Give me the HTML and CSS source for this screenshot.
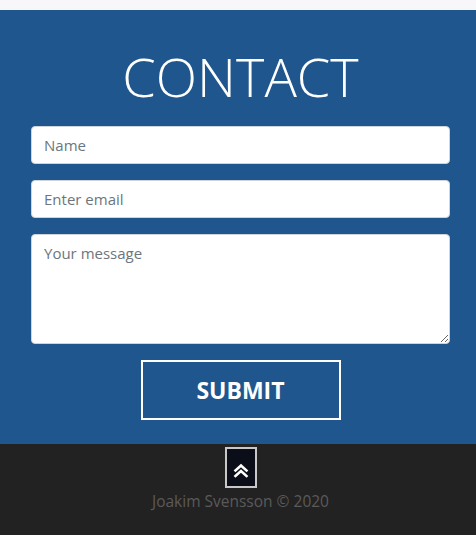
FILE: index.html
```html
<!DOCTYPE html>
<html lang="en">
<head>
<meta charset="utf-8">
<title>Contact</title>
<link rel="stylesheet" href="styles.css">
</head>
<body>
<div class="topbar"></div>
<section class="contact">
  <h1 class="title">CONTACT</h1>
  <form class="form">
    <input class="field" type="text" placeholder="Name">
    <input class="field" type="email" placeholder="Enter email">
    <textarea class="field area" placeholder="Your message"></textarea>
    <button class="submit" type="button">SUBMIT</button>
  </form>
</section>
<footer class="footer">
  <a class="up" href="#">
    <svg width="16" height="15" viewBox="0 0 16 15" fill="none" stroke="#fff" stroke-width="2.6" stroke-linecap="square" stroke-linejoin="miter">
      <polyline points="2.5,7.5 8,2.5 13.5,7.5"/>
      <polyline points="2.5,13 8,8 13.5,13"/>
    </svg>
  </a>
  <p class="copy">Joakim Svensson © 2020</p>
</footer>
</body>
</html>
```
FILE: styles.css
```css
* { box-sizing: border-box; }
html, body { margin: 0; padding: 0; }
body {
  font-family: "Open Sans", "Noto Sans", sans-serif;
  background: #222222;
}
.topbar {
  height: 10px;
  background: #f7f7f9;
}
.contact {
  background: #20568e;
  padding: 32px 26px 24px 31px;
  display: flex;
  flex-direction: column;
  align-items: center;
}
.title {
  margin: 0 0 16px;
  font-weight: 300;
  font-size: 54px;
  line-height: 68px;
  color: #fff;
  letter-spacing: 0;
}
.form {
  width: 100%;
  display: flex;
  flex-direction: column;
  align-items: center;
}
.field {
  width: 100%;
  height: 38px;
  margin: 0 0 16px;
  padding: 6px 12px;
  border: 1px solid #ced4da;
  border-radius: 4px;
  background: #fff;
  font-family: inherit;
  font-size: 15px;
  color: #495057;
  display: block;
}
.field::placeholder { color: #6c757d; opacity: 1; }
.area {
  height: 110px;
  padding-top: 8px;
  resize: vertical;
}
.submit {
  width: 200px;
  height: 60px;
  background: transparent;
  border: 2px solid #fff;
  color: #fff;
  font-family: inherit;
  font-weight: 700;
  font-size: 23px;
  letter-spacing: 0;
  cursor: pointer;
}
.footer {
  height: 92px;
  display: flex;
  flex-direction: column;
  align-items: center;
  padding: 3px 26px 0 31px;
}
.up {
  width: 32px;
  height: 41px;
  background: #0b0e19;
  border: 2px solid #c8c8c8;
  display: flex;
  align-items: center;
  justify-content: center;
  padding-top: 6px;
}
.copy {
  margin: 3px 0 0;
  font-size: 15.5px;
  line-height: 20px;
  color: #5a5a5a;
}
```
